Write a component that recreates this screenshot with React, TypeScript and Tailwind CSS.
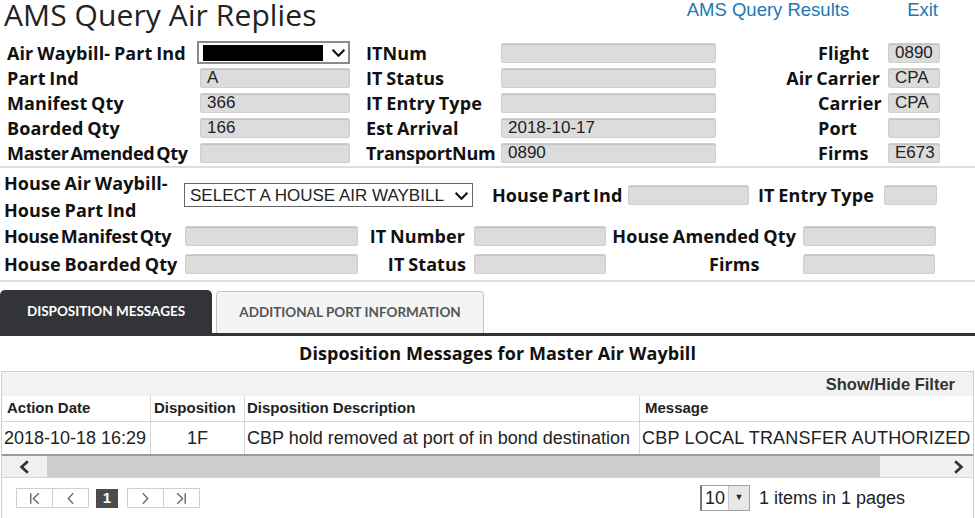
import React from "react";

const LBL = "font-['Open_Sans',sans-serif] font-bold text-[18px] text-[#111] leading-none tracking-[0.1px] [word-spacing:-1px] whitespace-nowrap";
const VAL = "font-['Liberation_Sans',Arial,sans-serif] text-[17px] text-[#222]";

function Field({ w, v, h = 20 }: { w: number; v?: string; h?: number }) {
  return (
    <div
      className={`${VAL} flex items-center pl-[6px] bg-[#dcdcdc] border border-[#cfcfcf] rounded-[2px] shadow-[inset_0_1px_1px_rgba(0,0,0,0.12)] leading-none`}
      style={{ width: w, height: h }}
    >
      {v}
    </div>
  );
}

function Chevron({ size = 15 }: { size?: number }) {
  return (
    <svg width={size} height={size} viewBox="0 0 14 14">
      <path d="M1.5 4.5 L7 10 L12.5 4.5" fill="none" stroke="#111" strokeWidth="2" />
    </svg>
  );
}

export default function App() {
  const rows1: [string, string | undefined, string, string | undefined, string, string | undefined, boolean][] = [
    ["Part Ind", "A", "IT Status", undefined, "Air Carrier", "CPA", true],
    ["Manifest Qty", "366", "IT Entry Type", undefined, "Carrier", "CPA", false],
    ["Boarded Qty", "166", "Est Arrival", "2018-10-17", "Port", undefined, false],
    ["Master Amended Qty", undefined, "TransportNum", "0890", "Firms", "E673", false],
  ];
  return (
    <div className="w-[975px] h-[518px] bg-white overflow-hidden relative">
      {/* Header */}
      <div className="flex items-start h-[40px]">
        <div className="pl-[4px] font-['Open_Sans',sans-serif] text-[30px] leading-[30px] text-[#222] tracking-[0.1px]">
          AMS Query Air Replies
        </div>
        <div className="ml-auto flex pt-[0px] font-['Liberation_Sans',Arial,sans-serif] text-[18.5px] leading-[20px] text-[#1c78b5]">
          <span className="mr-[58px]">AMS Query Results</span>
          <span className="mr-[37px]">Exit</span>
        </div>
      </div>

      {/* Section 1 */}
      <div className="pl-[7px]">
        <div className="flex items-center h-[25px]">
          <div className={`${LBL} w-[190px]`}>Air Waybill- Part Ind</div>
          <div className="w-[153px] h-[23px] border-2 border-[#8a8a8a] bg-white flex items-center pl-[4px] pr-[2px]">
            <div className="w-[120px] h-[16px] bg-black" />
            <div className="ml-auto">
              <Chevron />
            </div>
          </div>
          <div className={`${LBL} ml-[16px] w-[135px]`}>ITNum</div>
          <Field w={215} />
          <div className={`${LBL} w-[164px] pl-[102px]`}>Flight</div>
          <div className="ml-[8px]">
            <Field w={52} v="0890" />
          </div>
        </div>
        {rows1.map((r, i) => (
          <div key={i} className="flex items-center h-[25px]">
            <div className={`${LBL} w-[193px] ${i === 3 ? "![word-spacing:-2.5px] !tracking-[-0.3px]" : ""}`}>{r[0]}</div>
            <Field w={150} v={r[1]} />
            <div className={`${LBL} ml-[16px] w-[135px] ${i === 3 ? "!tracking-[-0.3px]" : ""}`}>{r[2]}</div>
            <Field w={215} v={r[3]} />
            <div className={`${LBL} w-[164px] ${r[6] ? "text-right" : "pl-[102px]"}`}>{r[4]}</div>
            <div className="ml-[8px]">
              <Field w={52} v={r[5]} />
            </div>
          </div>
        ))}
      </div>
      <div className="h-[2px] bg-[#dedede] mt-[1px]" />

      {/* Section 2 */}
      <div className="pl-[4px]">
        <div className="flex items-center h-[54px]">
          <div className={`${LBL} w-[180px] flex flex-col gap-[9px] pt-[3px]`}>
            <span>House Air Waybill-</span>
            <span>House Part Ind</span>
          </div>
          <div className="w-[289px] h-[24px] border border-[#666] bg-white flex items-center pl-[5px] pr-[3px] font-['Liberation_Sans',Arial,sans-serif] text-[17px] text-[#222] leading-none">
            <span>SELECT A HOUSE AIR WAYBILL</span>
            <div className="ml-auto">
              <Chevron />
            </div>
          </div>
          <div className={`${LBL} ml-[19px] w-[136px] ![word-spacing:-2px]`}>House Part Ind</div>
          <Field w={121} />
          <div className={`${LBL} ml-[9px] w-[126px]`}>IT Entry Type</div>
          <Field w={53} />
        </div>
        <div className="flex items-center h-[28px]">
          <div className={`${LBL} w-[181px] ![word-spacing:-2.5px] !tracking-[-0.3px]`}>House Manifest Qty</div>
          <Field w={173} />
          <div className={`${LBL} w-[107px] text-right`}>IT Number</div>
          <div className="ml-[9px]">
            <Field w={132} />
          </div>
          <div className={`${LBL} w-[190px] text-right`}>House Amended Qty</div>
          <div className="ml-[7px]">
            <Field w={133} />
          </div>
        </div>
        <div className="flex items-center h-[28px]">
          <div className={`${LBL} w-[181px]`}>House Boarded Qty</div>
          <Field w={173} />
          <div className={`${LBL} w-[108px] text-right`}>IT Status</div>
          <div className="ml-[8px]">
            <Field w={132} />
          </div>
          <div className={`${LBL} w-[190px] pl-[103px]`}>Firms</div>
          <div className="ml-[7px]">
            <Field w={132} />
          </div>
        </div>
      </div>
      <div className="h-[2px] bg-[#dedede] mt-[2px]" />

      {/* Tabs */}
      <div className="mt-[8px] flex items-end h-[43px]">
        <div className="w-[212px] h-[43px] bg-[#333438] rounded-t-[5px] flex items-center justify-center font-['Lato',sans-serif] font-bold text-[13.5px] text-white">
          DISPOSITION MESSAGES
        </div>
        <div className="ml-[4px] w-[268px] h-[42px] bg-[#f3f4f6] border border-[#c4c4c4] border-b-0 rounded-t-[4px] flex items-center justify-center font-['Lato',sans-serif] font-bold text-[13.5px] text-[#555]">
          ADDITIONAL PORT INFORMATION
        </div>
      </div>
      <div className="h-[3px] bg-[#333438]" />

      <div className="pl-[20px] text-center font-['Open_Sans',sans-serif] font-bold text-[18px] tracking-[0.1px] text-[#111] h-[35px] flex items-center justify-center">
        Disposition Messages for Master Air Waybill
      </div>

      {/* Grid */}
      <div className="mx-[1px] border border-[#cfcfcf] font-['Liberation_Sans',Arial,sans-serif] text-[#222]">
        <div className="h-[24px] bg-[#f2f2f2] flex items-center justify-end pr-[18px] font-bold text-[16.5px] text-[#333]">
          Show/Hide Filter
        </div>
        <div className="flex h-[26px] items-center font-bold text-[15px] border-b border-[#d6d6d6]">
          <div className="w-[149px] pl-[5px] h-full flex items-center border-r border-[#d6d6d6]">Action Date</div>
          <div className="w-[94px] pl-[3px] h-full flex items-center border-r border-[#d6d6d6]">Disposition</div>
          <div className="w-[395px] pl-[2px] h-full flex items-center border-r border-[#d6d6d6]">Disposition Description</div>
          <div className="flex-1 pl-[5px] h-full flex items-center">Message</div>
        </div>
        <div className="flex h-[34px] items-center text-[18px] border-b-2 border-[#9a9a9a] whitespace-nowrap">
          <div className="w-[149px] pl-[2px] h-full flex items-center border-r border-[#d6d6d6]">2018-10-18 16:29</div>
          <div className="w-[94px] h-full flex items-center justify-center border-r border-[#d6d6d6]">1F</div>
          <div className="w-[395px] pl-[2px] h-full flex items-center border-r border-[#d6d6d6] overflow-hidden">
            CBP hold removed at port of in bond destination
          </div>
          <div className="flex-1 pl-[2px] h-full flex items-center overflow-hidden tracking-[0.2px]">CBP LOCAL TRANSFER AUTHORIZED</div>
        </div>
        {/* Scrollbar */}
        <div className="flex h-[22px] bg-[#f0f0f0] border-b border-[#d6d6d6]">
          <div className="w-[45px] flex items-center justify-center">
            <svg width="16" height="16" viewBox="0 0 14 14">
              <path d="M9.5 2 L4 7 L9.5 12" fill="none" stroke="#333" strokeWidth="2.4" />
            </svg>
          </div>
          <div className="w-[833px] bg-[#cdcdcd]" />
          <div className="flex-1" />
          <div className="w-[30px] flex items-center justify-center">
            <svg width="16" height="16" viewBox="0 0 14 14">
              <path d="M4.5 2 L10 7 L4.5 12" fill="none" stroke="#333" strokeWidth="2.4" />
            </svg>
          </div>
        </div>
        {/* Pager */}
        <div className="flex items-center h-[40px] pl-[14px] pr-[16px]">
          <div className="flex">
            <PagerBtn d="M3.5 2 V12 M11 2 L6 7 L11 12" />
            <PagerBtn d="M9.5 2 L5 7 L9.5 12" />
          </div>
          <div className="ml-[7px] w-[22px] h-[19px] bg-[#4a4b4f] text-white text-[15px] font-bold flex items-center justify-center">1</div>
          <div className="ml-[9px] flex">
            <PagerBtn d="M4.5 2 L9 7 L4.5 12" />
            <PagerBtn d="M3 2 L8 7 L3 12 M10.5 2 V12" />
          </div>
          <div className="ml-auto flex items-center">
            <div className="flex items-stretch h-[26px] border border-[#a0a0a0] border-l-2 border-l-[#777]">
              <span className="text-[18px] w-[26px] flex items-center justify-center">10</span>
              <span className="w-[21px] bg-[#e8e8e8] border-l border-[#c8c8c8] flex items-center justify-center text-[9px]">▼</span>
            </div>
            <span className="ml-[9px] text-[18px] mr-[52px]">1 items in 1 pages</span>
          </div>
        </div>
      </div>
    </div>
  );
}

function PagerBtn({ d }: { d: string }) {
  return (
    <div className="w-[37px] h-[20px] border border-[#d0d0d0] bg-white flex items-center justify-center -ml-[1px] first:ml-0">
      <svg width="15" height="15" viewBox="0 0 14 14">
        <path d={d} fill="none" stroke="#666" strokeWidth="1.3" />
      </svg>
    </div>
  );
}
